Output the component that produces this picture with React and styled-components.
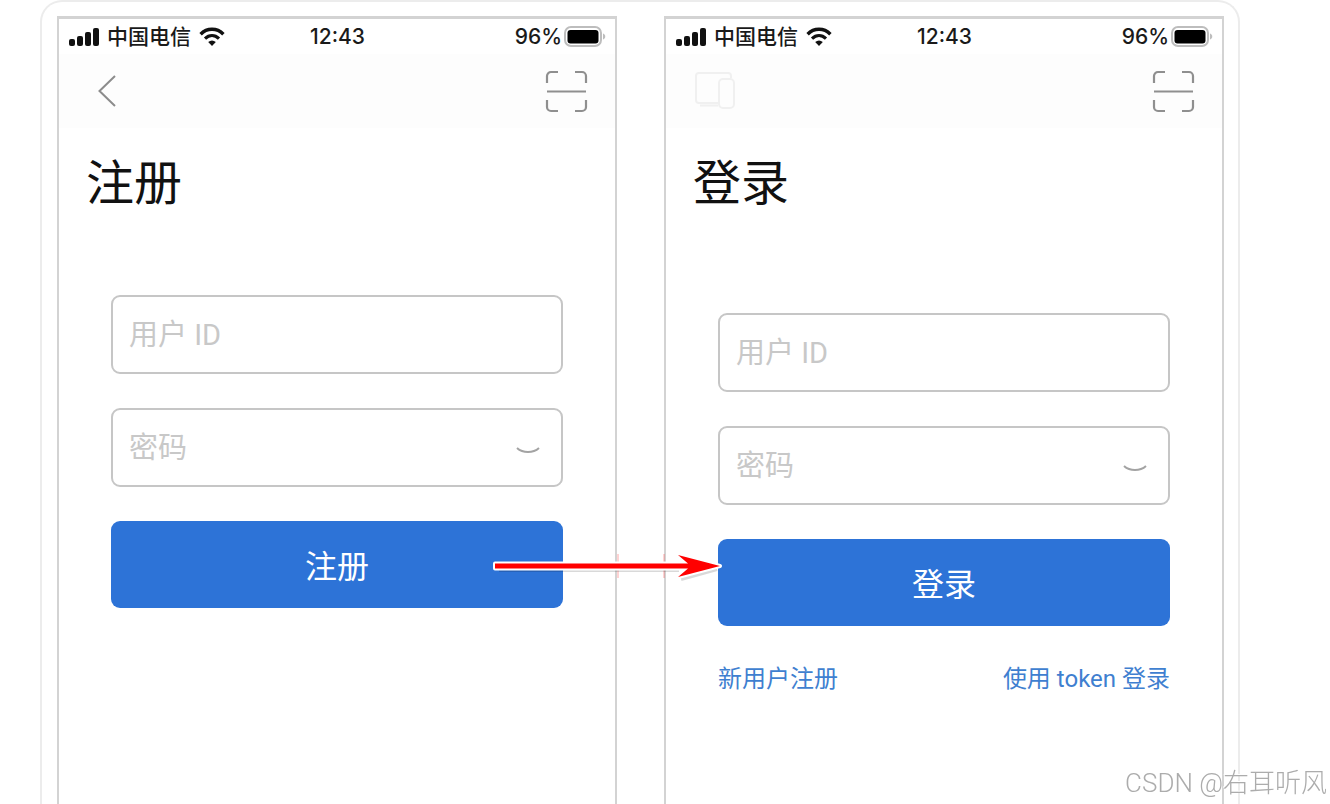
import React, { useState } from "react";
import styled, { createGlobalStyle } from "styled-components";

const GlobalStyle = createGlobalStyle`
  * {
    box-sizing: border-box;
  }

  body {
    margin: 0;
    background: #fff;
    font-family: Roboto, "Noto Sans CJK SC", sans-serif;
  }

  button,
  input {
    font-family: inherit;
  }
`;

const Page = styled.main`
  display: flex;
  min-height: 100vh;
  padding: 0 90px 0 40px;
  overflow: hidden;
`;

const Frame = styled.div`
  flex: 1;
  display: flex;
  padding: 14px 14px 0 15px;
  border: 2px solid #ececec;
  border-bottom: 0;
  border-radius: 22px 22px 0 0;
`;

const Screens = styled.div`
  position: relative;
  flex: 1;
  display: grid;
  grid-template-columns: 1fr 1fr;
  gap: 47px;
`;

const Phone = styled.section`
  border: solid #d3d3d3;
  border-width: 3px 2px 0;
  background: #fff;
`;

const StatusBar = styled.div`
  display: grid;
  grid-template-columns: 1fr auto 1fr;
  align-items: center;
  height: 35px;
  padding: 0 9px 0 10px;
  color: #1a1a1a;
  font-family: Inter, "Noto Sans CJK SC", sans-serif;
  font-size: 21px;
  font-weight: 500;
  line-height: 34px;
`;

const StatusGroup = styled.div`
  display: flex;
  align-items: center;
  justify-content: ${(props) => (props.$end ? "flex-end" : "flex-start")};
  gap: ${(props) => (props.$end ? "2px" : "8px")};
`;

const NavBar = styled.nav`
  display: flex;
  align-items: center;
  justify-content: space-between;
  height: 74px;
  padding: 0 27px 0 28px;
  background: #fdfdfd;
`;

const IconButton = styled.button`
  display: flex;
  padding: 0;
  border: 0;
  background: none;
  cursor: pointer;
`;

const Title = styled.h1`
  margin: 0;
  padding: 26px 27px 0;
  color: #111;
  font-size: 48px;
  font-weight: 400;
  line-height: 60px;
`;

const Form = styled.form`
  display: flex;
  flex-direction: column;
  gap: 34px;
  padding: ${(props) => (props.$lower ? "99px" : "81px")} 52px 0;
`;

const Field = styled.div`
  display: flex;
  align-items: center;
  height: 79px;
  padding: 0 21px 0 16px;
  border: 2px solid #c6c6c6;
  border-radius: 9px;
`;

const Input = styled.input`
  flex: 1;
  min-width: 0;
  height: 60px;
  padding: 0;
  border: 0;
  outline: 0;
  background: none;
  color: #333;
  font-size: 29px;

  &::placeholder {
    color: #c8c8c8;
    opacity: 1;
  }
`;

const SubmitButton = styled.button`
  height: 87px;
  padding: 0 0 2px;
  border: 0;
  border-radius: 9px;
  background: #2d73d7;
  color: #fff;
  font-size: 32px;
  cursor: pointer;
`;

const Links = styled.div`
  display: flex;
  justify-content: space-between;
`;

const TextLink = styled.a`
  color: #3f7fd0;
  font-size: 24px;
  line-height: 38px;
  text-decoration: none;
`;

const Arrow = styled.svg`
  position: absolute;
  top: 532px;
  left: calc(50% - 152px);
  pointer-events: none;
`;

const Watermark = styled.div`
  position: fixed;
  right: 3px;
  bottom: 3px;
  color: #acacac;
  font-size: 26px;
  font-weight: 300;
  line-height: 36px;
  text-shadow: -1px -1px 0 #fff;
`;

const SignalIcon = () => (
  <svg width="30" height="20" viewBox="0 0 30 20" fill="#111">
    <rect x="0" y="12" width="6" height="7" rx="2" />
    <rect x="8" y="9" width="6" height="10" rx="2" />
    <rect x="16" y="5" width="6" height="14" rx="2" />
    <rect x="24" y="1" width="6" height="18" rx="2" />
  </svg>
);

const WifiIcon = () => (
  <svg width="26" height="20" viewBox="0 0 26 20" fill="none" stroke="#111">
    <path d="M1.6 7.2C8 .6 18 .6 24.4 7.2" strokeWidth="3.4" />
    <path d="M6 11.6c4.2-4 9.8-4 14 0" strokeWidth="3.2" />
    <path d="M9.2 15c2.4-2 5.2-2 7.6 0L13 19z" fill="#111" stroke="none" />
  </svg>
);

const BatteryIcon = () => (
  <svg width="42" height="22" viewBox="0 0 42 22" fill="none">
    <rect x="1" y="1" width="36" height="19" rx="6" stroke="#bdbdbd" strokeWidth="2" />
    <rect x="3.5" y="4" width="31" height="13.5" rx="3" fill="#000" />
    <path d="M39 7.5c3 1 3 5 0 6z" fill="#bdbdbd" />
  </svg>
);

const BackIcon = () => (
  <svg width="42" height="42" viewBox="0 0 42 42" fill="none" stroke="#8c8c8c" strokeWidth="2">
    <path d="M28 6 12.5 21 28 36" />
  </svg>
);

const DevicesIcon = () => (
  <svg width="42" height="42" viewBox="0 0 42 42" fill="none" stroke="#f0f0f0" strokeWidth="2">
    <path d="M37 8V6a3 3 0 0 0-3-3H5a3 3 0 0 0-3 3v24a3 3 0 0 0 3 3h19M6 35.5h18" />
    <rect x="25" y="9" width="15" height="29" rx="4" />
  </svg>
);

const ScanIcon = () => (
  <svg width="43" height="43" viewBox="0 0 43 43" fill="none" stroke="#8f8f8f" strokeWidth="2.2">
    <path d="M2 13V6a4 4 0 0 1 4-4h7M30 2h7a4 4 0 0 1 4 4v7M2 30v7a4 4 0 0 0 4 4h7M30 41h7a4 4 0 0 0 4-4v-7M2 21.5h39" />
  </svg>
);

const ClosedEyeIcon = () => (
  <svg width="24" height="12" viewBox="0 0 24 12" fill="none" stroke="#a3a3a3" strokeWidth="2">
    <path d="M1 6c6 5.4 16 5.4 22 0" />
  </svg>
);

const TextField = ({ label, children, ...inputProps }) => (
  <Field>
    <Input aria-label={label} placeholder={label} {...inputProps} />
    {children}
  </Field>
);

const AccountScreen = ({ title, navIcon, navLabel, lower, children }) => {
  const [showPassword, setShowPassword] = useState(false);

  return (
    <Phone>
      <StatusBar>
        <StatusGroup>
          <SignalIcon />
          <span>中国电信</span>
          <WifiIcon />
        </StatusGroup>
        <span>12:43</span>
        <StatusGroup $end>
          <span>96%</span>
          <BatteryIcon />
        </StatusGroup>
      </StatusBar>
      <NavBar>
        <IconButton aria-label={navLabel}>{navIcon}</IconButton>
        <IconButton aria-label="扫一扫">
          <ScanIcon />
        </IconButton>
      </NavBar>
      <Title>{title}</Title>
      <Form $lower={lower} onSubmit={(e) => e.preventDefault()}>
        <TextField label="用户 ID" type="text" />
        <TextField label="密码" type={showPassword ? "text" : "password"}>
          <IconButton
            type="button"
            aria-label="显示密码"
            onClick={() => setShowPassword(!showPassword)}
          >
            <ClosedEyeIcon />
          </IconButton>
        </TextField>
        <SubmitButton type="submit">{title}</SubmitButton>
        {children}
      </Form>
    </Phone>
  );
};

const App = () => (
  <>
    <GlobalStyle />
    <Page>
      <Frame>
        <Screens>
          <AccountScreen title="注册" navIcon={<BackIcon />} navLabel="返回" />
          <AccountScreen
            title="登录"
            navIcon={<DevicesIcon />}
            navLabel="设备"
            lower
          >
            <Links>
              <TextLink href="#register">新用户注册</TextLink>
              <TextLink href="#token">使用 token 登录</TextLink>
            </Links>
          </AccountScreen>
          <Arrow width="238" height="38" viewBox="0 0 238 38" fill="none">
            <path d="M129 6v24M175 6v24" stroke="#f00" strokeOpacity=".35" />
            <path d="M10 22h180M192 31l36-10" stroke="#000" strokeOpacity=".15" strokeWidth="4" />
            <path
              d="M6 15.5h193l-10-8.500 42 11-42 11 10-8.500H6z"
              fill="#f00"
              stroke="#fff"
              strokeWidth="4"
              strokeLinejoin="round"
            />
            <path d="M6 15.5h193l-10-8.500 42 11-42 11 10-8.500H6z" fill="#f00" />
          </Arrow>
        </Screens>
      </Frame>
      <Watermark>CSDN @右耳听风</Watermark>
    </Page>
  </>
);

export default App;
